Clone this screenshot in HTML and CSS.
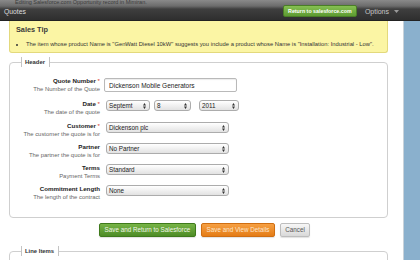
FILE: index.html
```html
<!DOCTYPE html>
<html>
<head>
<meta charset="UTF-8">
<title>Quotes</title>
<link rel="stylesheet" href="styles.css">
</head>
<body>
<div class="topbar">
	<span class="wintitle">Editing Salesforce.com Opportunity record in Mimiran.</span>
	<span class="appname">Quotes</span>
	<a class="btn-return" href="#">Return to salesforce.com</a>
	<span class="options">Options <svg class="caret" width="5" height="3" viewBox="0 0 5 3"><path d="M0 0h5L2.5 3z" fill="#9a9a9a"/></svg></span>
</div>
<div class="page">
	<div class="content">
		<div class="tip">
			<h3>Sales Tip</h3>
			<ul>
				<li>The item whose product Name is "GenWatt Diesel 10kW" suggests you include a product whose Name is "Installation: Industrial - Low".</li>
			</ul>
		</div>

		<fieldset class="group">
			<legend>Header</legend>
			<div class="fields">
				<div class="row r1">
					<div class="lbl">
						<div class="name">Quote Number <span class="req">*</span></div>
						<div class="hint">The Number of the Quote</div>
					</div>
					<div class="ctl"><input class="txt" type="text" value="Dickenson Mobile Generators"></div>
				</div>
				<div class="row r2">
					<div class="lbl">
						<div class="name">Date <span class="req">*</span></div>
						<div class="hint">The date of the quote</div>
					</div>
					<div class="ctl dates">
						<span class="sel s-month"><span class="val">Septemt</span><span class="arr"><svg width="3" height="6" viewBox="0 0 3 6"><path d="M0 2.4L1.5 0 3 2.4zM0 3.6h3L1.5 6z" fill="#333"/></svg></span></span>
						<span class="sel s-day"><span class="val">8</span><span class="arr"><svg width="3" height="6" viewBox="0 0 3 6"><path d="M0 2.4L1.5 0 3 2.4zM0 3.6h3L1.5 6z" fill="#333"/></svg></span></span>
						<span class="sel s-year"><span class="val">2011</span><span class="arr"><svg width="3" height="6" viewBox="0 0 3 6"><path d="M0 2.4L1.5 0 3 2.4zM0 3.6h3L1.5 6z" fill="#333"/></svg></span></span>
					</div>
				</div>
				<div class="row">
					<div class="lbl">
						<div class="name">Customer <span class="req">*</span></div>
						<div class="hint">The customer the quote is for</div>
					</div>
					<div class="ctl"><span class="sel s-wide"><span class="val">Dickenson plc</span><span class="arr"><svg width="3" height="6" viewBox="0 0 3 6"><path d="M0 2.4L1.5 0 3 2.4zM0 3.6h3L1.5 6z" fill="#333"/></svg></span></span></div>
				</div>
				<div class="row">
					<div class="lbl">
						<div class="name">Partner</div>
						<div class="hint">The partner the quote is for</div>
					</div>
					<div class="ctl"><span class="sel s-wide"><span class="val">No Partner</span><span class="arr"><svg width="3" height="6" viewBox="0 0 3 6"><path d="M0 2.4L1.5 0 3 2.4zM0 3.6h3L1.5 6z" fill="#333"/></svg></span></span></div>
				</div>
				<div class="row">
					<div class="lbl">
						<div class="name">Terms</div>
						<div class="hint">Payment Terms</div>
					</div>
					<div class="ctl"><span class="sel s-wide"><span class="val">Standard</span><span class="arr"><svg width="3" height="6" viewBox="0 0 3 6"><path d="M0 2.4L1.5 0 3 2.4zM0 3.6h3L1.5 6z" fill="#333"/></svg></span></span></div>
				</div>
				<div class="row last">
					<div class="lbl">
						<div class="name">Commitment Length</div>
						<div class="hint">The length of the contract</div>
					</div>
					<div class="ctl"><span class="sel s-wide"><span class="val">None</span><span class="arr"><svg width="3" height="6" viewBox="0 0 3 6"><path d="M0 2.4L1.5 0 3 2.4zM0 3.6h3L1.5 6z" fill="#333"/></svg></span></span></div>
				</div>
			</div>
		</fieldset>

		<div class="actions">
			<button class="btn btn-green" type="button">Save and Return to Salesforce</button>
			<button class="btn btn-orange" type="button">Save and View Details</button>
			<button class="btn btn-grey" type="button">Cancel</button>
		</div>

		<fieldset class="group lines">
			<legend>Line Items</legend>
		</fieldset>
	</div>
	<div class="sidebar"></div>
</div>
</body>
</html>
```

FILE: styles.css
```css
body {
	margin: 0;
	height: 260px;
	overflow: hidden;
	background: #fff;
	font-family: "Liberation Sans", Arial, sans-serif;
	color: #222;
}

/* top bar */
.topbar {
	position: relative;
	height: 21px;
	display: flex;
	align-items: center;
	padding: 2px 21px 0 4px;
	box-sizing: border-box;
	background: linear-gradient(#8a8a8a 0, #6c6c6c 6px, #3f3f3f 9px, #2e2e2e 100%);
	border-bottom: 1px solid #222;
}
.wintitle {
	position: absolute;
	left: 15px;
	top: -2px;
	font-size: 5.5px;
	line-height: 8px;
	color: #3c3c3c;
	white-space: nowrap;
}
.appname {
	font-size: 6.8px;
	color: #ddd;
}
.btn-return {
	margin-left: auto;
	width: 74px;
	height: 12px;
	box-sizing: border-box;
	border: 1px solid #4a7d27;
	border-radius: 2px;
	background: linear-gradient(#86c052, #5d9b31);
	color: #fff;
	font-size: 5.3px;
	font-weight: bold;
	line-height: 10px;
	text-align: center;
	text-decoration: none;
}
.options {
	margin-left: 8px;
	display: flex;
	align-items: center;
	gap: 5px;
	font-size: 7px;
	color: #c6c6c6;
}

/* page */
.page {
	display: flex;
	height: 239px;
}
.content {
	width: 403px;
	flex: none;
	padding: 0 15px 0 9px;
	box-sizing: border-box;
	overflow: hidden;
}
.sidebar {
	flex: 1;
	background: #8ab0cd;
	border-left: 1px solid #c8d2da;
}

/* sales tip */
.tip {
	background: #fbf5a4;
	border: 1px solid #e3d97c;
	border-top: none;
	border-radius: 0 0 3px 3px;
	padding: 4px 6px 4px 6px;
}
.tip h3 {
	margin: 0;
	font-size: 7.3px;
	line-height: 9px;
	color: #3a3a3a;
}
.tip ul {
	margin: 6px 0 0 0;
	padding: 0 0 0 10px;
}
.tip li {
	font-size: 5.8px;
	line-height: 8px;
	color: #333;
	white-space: nowrap;
}

/* groups */
.group {
	margin: 4px 0 0 0;
	padding: 0;
	border: 1px solid #cfcfcf;
	border-radius: 4px;
	min-width: 0;
}
.group legend {
	margin-left: 11px;
	padding: 0 4px 0 3px;
	border-left: 1px solid #c4c4c4;
	border-right: 1px solid #c4c4c4;
	font-size: 5.9px;
	font-weight: bold;
	line-height: 10px;
	color: #333;
}
.fields {
	padding: 10px 0 12px 0;
}
.row {
	display: grid;
	grid-template-columns: 90px 1fr;
	column-gap: 4px;
	height: 21px;
}
.row.r1 {
	height: 23px;
}
.row.r2 {
	height: 22px;
}
.row.last {
	height: 20px;
}
.lbl {
	text-align: right;
}
.name {
	font-size: 6.2px;
	font-weight: bold;
	line-height: 8px;
	color: #222;
}
.req {
	color: #d6352a;
	font-weight: normal;
}
.hint {
	font-size: 5.9px;
	line-height: 8px;
	color: #666;
	white-space: nowrap;
}

/* controls */
.txt {
	display: block;
	width: 133px;
	height: 14px;
	margin: 1px 0 0 0;
	box-sizing: border-box;
	border: 1px solid #b9b9b9;
	border-radius: 2px;
	padding: 0 4px;
	font-family: "Liberation Sans", Arial, sans-serif;
	font-size: 6.5px;
	color: #222;
	box-shadow: inset 0 1px 1px rgba(0,0,0,0.08);
}
.dates {
	display: flex;
	gap: 2px;
}
.sel {
	display: flex;
	align-items: center;
	height: 11px;
	margin-left: 2px;
	box-sizing: border-box;
	border: 1px solid #acacac;
	border-radius: 3px;
	background: linear-gradient(#fff, #e2e2e2);
	font-size: 6.3px;
	color: #222;
}
.sel .val {
	flex: 1;
	padding-left: 2px;
	white-space: nowrap;
}
.sel .arr {
	display: flex;
	width: 10px;
	justify-content: center;
	align-items: center;
}
.s-month {
	width: 44px;
}
.s-day {
	width: 37px;
}
.s-year {
	width: 40px;
	margin-left: 6px;
}
.s-wide {
	width: 123px;
}

/* buttons */
.actions {
	display: flex;
	gap: 5px;
	margin: 5px 0 0 90px;
}
.btn {
	height: 14px;
	padding: 0;
	box-sizing: border-box;
	border-radius: 2px;
	font-family: "Liberation Sans", Arial, sans-serif;
	font-size: 6.3px;
	line-height: 12px;
	box-shadow: 0 1px 1px rgba(0,0,0,0.12);
}
.btn-green {
	width: 97px;
	border: 1px solid #3f7a1c;
	background: linear-gradient(#77b446, #4d8c26);
	color: #f2f7ea;
}
.btn-orange {
	width: 74px;
	border: 1px solid #cf6e12;
	background: linear-gradient(#f6a043, #e47c16);
	color: #fde6cc;
}
.btn-grey {
	width: 30px;
	border: 1px solid #bdbdbd;
	background: linear-gradient(#f7f7f7, #d9d9d9);
	color: #555;
}

.group.lines {
	margin-top: 9px;
	height: 30px;
}
```
